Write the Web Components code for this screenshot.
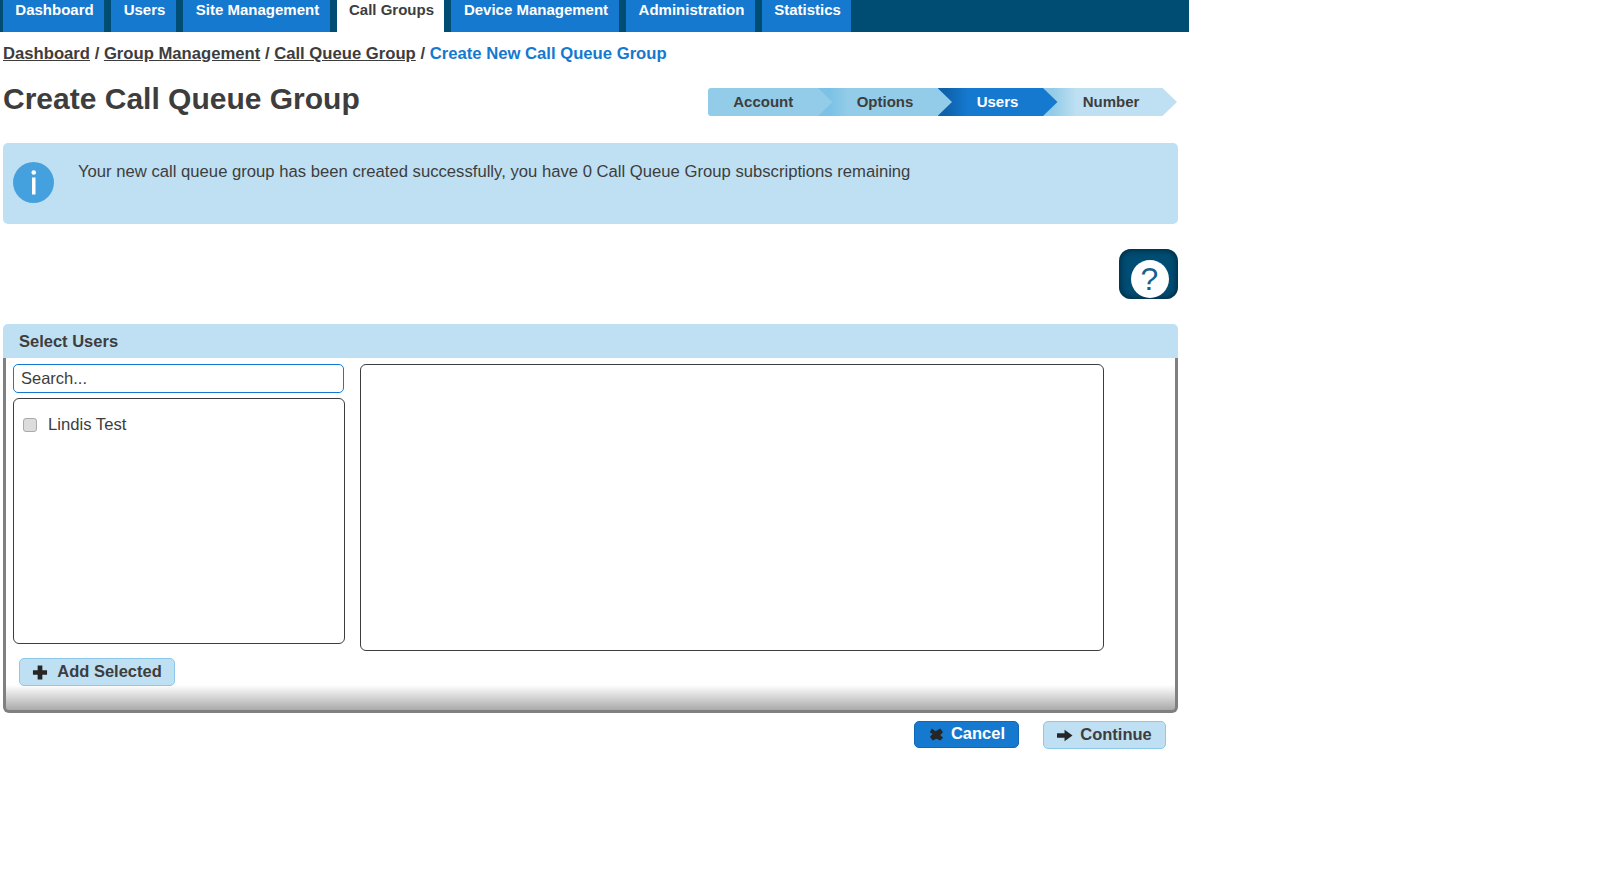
<!DOCTYPE html>
<html lang="en">
<head>
<meta charset="utf-8">
<title>Create Call Queue Group</title>
<style>
  html, body { margin: 0; padding: 0; background: #fff; }
  body { font-family: "Liberation Sans", Arial, sans-serif; color: #3d3d3d; }
</style>
</head>
<body>
<app-nav>
  <nav-tab width="101">Dashboard</nav-tab>
  <nav-tab width="65">Users</nav-tab>
  <nav-tab width="147">Site Management</nav-tab>
  <nav-tab width="107" active>Call Groups</nav-tab>
  <nav-tab width="168">Device Management</nav-tab>
  <nav-tab width="129">Administration</nav-tab>
  <nav-tab width="89">Statistics</nav-tab>
</app-nav>
<page-main>
  <bread-crumb current="Create New Call Queue Group">
    <a href="#">Dashboard</a>
    <a href="#">Group Management</a>
    <a href="#">Call Queue Group</a>
  </bread-crumb>
  <page-heading heading="Create Call Queue Group">
    <step-item width="124.5" pad="14" kind="done" first>Account</step-item>
    <step-item width="134" kind="done">Options</step-item>
    <step-item width="120" kind="current">Users</step-item>
    <step-item width="134" pad="-2" kind="todo">Number</step-item>
  </page-heading>
  <info-box>Your new call queue group has been created successfully, you have 0 Call Queue Group subscriptions remaining</info-box>
  <help-button></help-button>
  <select-panel heading="Select Users">
    <user-check>Lindis Test</user-check>
  </select-panel>
  <form-actions>
    <action-button kind="primary" icon="cross" width="105">Cancel</action-button>
    <action-button kind="light" icon="arrow" width="123">Continue</action-button>
  </form-actions>
</page-main>

<script>
const ICONS = {
  plus: '<path d="M6 0h5v5h5v5h-5v5H6v-5H1V5h5z"/>',
  cross: '<path d="M4 1l4 3 5-3 3 4-3 3 3 3-3 3-4-2-4 2-3-4 3-3-3-2z"/>',
  arrow: '<path d="M0 5h8V1.500L16.500 7.500 8 13.500V10H0z"/>'
};

class AppNav extends HTMLElement {
  constructor() {
    super();
    this.attachShadow({ mode: "open" });
    this.shadowRoot.innerHTML = `
      <style>
        :host { display: flex; width: 1189px; height: 32px; padding-left: 3px; box-sizing: border-box;
                background: #004d73; gap: 7px; }
      </style>
      <slot></slot>`;
  }
}

class NavTab extends HTMLElement {
  constructor() {
    super();
    this.attachShadow({ mode: "open" });
  }
  connectedCallback() {
    this.shadowRoot.innerHTML = `
      <style>
        :host { display: block; box-sizing: border-box; width: ${this.getAttribute("width")}px; height: 32px;
                padding-left: 2px; text-align: center; background: #1579d0; color: #fff; white-space: nowrap;
                font: bold 15px/20px "Liberation Sans", Arial, sans-serif; }
        :host([active]) { background: #fff; color: #3d3d3d; }
      </style>
      <slot></slot>`;
  }
}

class PageMain extends HTMLElement {
  constructor() {
    super();
    this.attachShadow({ mode: "open" });
    this.shadowRoot.innerHTML = `
      <style>
        :host { display: block; width: 1175px; margin-left: 3px; }
      </style>
      <slot></slot>`;
  }
}

class BreadCrumb extends HTMLElement {
  constructor() {
    super();
    this.attachShadow({ mode: "open" });
    this.shadowRoot.innerHTML = `
      <style>
        :host { display: block; margin-top: 12px; font: bold 16.670px/20px "Liberation Sans", Arial, sans-serif; color: #3d3d3d; }
        a { color: #3d3d3d; text-decoration: underline; }
        .current { color: #1579d0; }
      </style>
      <div id="trail"></div>`;
  }
  connectedCallback() {
    const parts = [...this.querySelectorAll("a")].map((a) => `<a href="#">${a.textContent}</a>`);
    parts.push(`<span class="current">${this.getAttribute("current")}</span>`);
    this.shadowRoot.getElementById("trail").innerHTML = parts.join(" / ");
  }
}

class PageHeading extends HTMLElement {
  constructor() {
    super();
    this.attachShadow({ mode: "open" });
  }
  connectedCallback() {
    this.shadowRoot.innerHTML = `
      <style>
        :host { display: flex; justify-content: space-between; align-items: flex-start; margin-top: 24px;
                padding-right: 1px; height: 28px; }
        h1 { margin: 1px 0 0; font: bold 30px/20px "Liberation Sans", Arial, sans-serif; color: #3d3d3d; }
        .steps { display: flex; }
      </style>
      <h1>${this.getAttribute("heading")}</h1>
      <div class="steps"><slot></slot></div>`;
  }
}

class StepItem extends HTMLElement {
  constructor() {
    super();
    this.attachShadow({ mode: "open" });
  }
  connectedCallback() {
    const width = this.getAttribute("width");
    const pad = this.getAttribute("pad") || 0;
    this.shadowRoot.innerHTML = `
      <style>
        :host { display: flex; align-items: center; justify-content: center; box-sizing: border-box;
                width: ${width}px; height: 28px; padding-right: ${Math.max(pad, 0)}px; padding-left: ${Math.max(-pad, 0)}px; margin-left: -14.500px;
                font: bold 15px/28px "Liberation Sans", Arial, sans-serif; color: #3d3d3d;
                clip-path: polygon(0 0, calc(100% - 14.500px) 0, 100% 50%, calc(100% - 14.500px) 100%, 0 100%); }
        :host([kind="done"]) { background: linear-gradient(90deg, #7bc2e6 0, #7bc2e6 12px, #93cce8 30px); }
        :host([kind="done"][first]) { background: #93cce8; margin-left: 0; border-radius: 3px 0 0 3px; }
        :host([kind="current"]) { background: linear-gradient(90deg, #0e62ab 0, #0e62ab 8px, #1579d0 30px); color: #fff; }
        :host([kind="todo"]) { background: linear-gradient(90deg, #93cce8 0, #93cce8 10px, #bfe0f2 34px); }
      </style>
      <slot></slot>`;
    // earlier steps sit on top so their arrow shows over the next one
    const index = [...this.parentNode.children].indexOf(this);
    this.style.position = "relative";
    this.style.zIndex = 10 - index;
  }
}

class InfoBox extends HTMLElement {
  constructor() {
    super();
    this.attachShadow({ mode: "open" });
    this.shadowRoot.innerHTML = `
      <style>
        :host { display: flex; margin-top: 27px; height: 81px; background: #bfe0f2; border-radius: 5px;
                box-sizing: border-box; padding: 19px 10px 0 10px; gap: 24px;
                font: 16.670px/20px "Liberation Sans", Arial, sans-serif; color: #3d3d3d; }
        svg { flex: none; width: 41px; height: 41px; }
      </style>
      <svg viewBox="0 0 41 41" aria-hidden="true">
        <circle cx="20.500" cy="20.500" r="20.500" fill="#45a1de"/>
        <rect x="19" y="15.500" width="3.500" height="17" fill="#fff"/>
        <circle cx="20.750" cy="10.500" r="2.300" fill="#fff"/>
      </svg>
      <div><slot></slot></div>`;
  }
}

class HelpButton extends HTMLElement {
  constructor() {
    super();
    this.attachShadow({ mode: "open" });
    this.shadowRoot.innerHTML = `
      <style>
        :host { display: flex; justify-content: flex-end; margin-top: 25px; }
        .btn { display: flex; align-items: center; justify-content: center; box-sizing: border-box;
               width: 59px; height: 50px; border-radius: 12px; padding-top: 9px; padding-left: 2px;
               background: #004d73; box-shadow: inset 0 0 6px 1px #00263b; }
        .dot { width: 38px; height: 38px; border-radius: 50%; background: #fff; color: #17608e;
               font: 32px/38px "Liberation Sans", Arial, sans-serif; text-align: center; }
      </style>
      <div class="btn"><div class="dot">?</div></div>`;
  }
}

class SelectPanel extends HTMLElement {
  constructor() {
    super();
    this.attachShadow({ mode: "open" });
  }
  connectedCallback() {
    this.shadowRoot.innerHTML = `
      <style>
        :host { display: block; margin-top: 25px; font-family: "Liberation Sans", Arial, sans-serif; color: #3d3d3d; }
        header { height: 34px; box-sizing: border-box; padding-left: 16px; background: #bfe0f2;
                 border-radius: 5px 5px 0 0; font: bold 16.500px/34px "Liberation Sans", Arial, sans-serif; }
        .body { box-sizing: border-box; height: 355px; padding: 6px 7px 0; border: solid #808080; border-width: 0 3px 3px;
                border-radius: 0 0 6px 6px;
                background: linear-gradient(180deg, #fff 0, #fff calc(100% - 25px), #aaa 100%); }
        .cols { display: flex; gap: 15px; align-items: flex-start; }
        .left { width: 332px; display: flex; flex-direction: column; gap: 5px; }
        input { box-sizing: border-box; width: 331px; height: 29px; padding: 0 7px; border: 1px solid #1579d0; border-radius: 5px;
                font: 16.500px "Liberation Sans", Arial, sans-serif; color: #3d3d3d; outline: none; }
        input::placeholder { color: #3d3d3d; opacity: 1; }
        .list { box-sizing: border-box; height: 246px; padding: 16px 9px; border: 1px solid #3d3d3d; border-radius: 6px; }
        .chosen { box-sizing: border-box; width: 744px; height: 287px; border: 1px solid #3d3d3d; border-radius: 6px; }
        .add { margin: 7px 0 0 6px; }
      </style>
      <header>${this.getAttribute("heading")}</header>
      <div class="body">
        <div class="cols">
          <div class="left">
            <input type="text" placeholder="Search...">
            <div class="list"><slot></slot></div>
          </div>
          <div class="chosen"></div>
        </div>
        <div class="add"><action-button kind="light" icon="plus" width="156">Add Selected</action-button></div>
      </div>`;
  }
}

class UserCheck extends HTMLElement {
  constructor() {
    super();
    this.attachShadow({ mode: "open" });
    this.shadowRoot.innerHTML = `
      <style>
        :host { display: flex; align-items: center; gap: 11px; height: 20px;
                font: 16.670px/20px "Liberation Sans", Arial, sans-serif; color: #3d3d3d; }
        .box { width: 14px; height: 14px; box-sizing: border-box; border: 1px solid #aaa; border-radius: 3px;
               background: #dcdcdc; }
      </style>
      <span class="box"></span><slot></slot>`;
  }
}

class FormActions extends HTMLElement {
  constructor() {
    super();
    this.attachShadow({ mode: "open" });
    this.shadowRoot.innerHTML = `
      <style>
        :host { display: flex; justify-content: flex-end; gap: 24px; margin-top: 8px; padding-right: 12px; }
      </style>
      <slot></slot>`;
  }
}

class ActionButton extends HTMLElement {
  constructor() {
    super();
    this.attachShadow({ mode: "open" });
  }
  connectedCallback() {
    const icon = ICONS[this.getAttribute("icon")];
    this.shadowRoot.innerHTML = `
      <style>
        :host { display: inline-flex; align-items: center; justify-content: center; gap: 7px; box-sizing: border-box;
                width: ${this.getAttribute("width")}px; height: 28px; border-radius: 5px; border: 1px solid #8cc8ea;
                padding-bottom: 2px; background: #bfe0f2;
                color: #3d3d3d; font: bold 16.500px/24px "Liberation Sans", Arial, sans-serif; }
        :host([kind="primary"]) { background: #1579d0; border-color: #1169b5; color: #fff; height: 27px; padding-bottom: 3px; }
        svg { width: 16px; height: 15px; fill: #262626; filter: blur(.7px); flex: none; margin-top: 2px; }
        :host([icon="plus"]) { gap: 9px; }
      </style>
      <svg viewBox="0 0 17 15" aria-hidden="true">${icon}</svg><slot></slot>`;
  }
}

customElements.define("app-nav", AppNav);
customElements.define("nav-tab", NavTab);
customElements.define("page-main", PageMain);
customElements.define("bread-crumb", BreadCrumb);
customElements.define("page-heading", PageHeading);
customElements.define("step-item", StepItem);
customElements.define("info-box", InfoBox);
customElements.define("help-button", HelpButton);
customElements.define("select-panel", SelectPanel);
customElements.define("user-check", UserCheck);
customElements.define("form-actions", FormActions);
customElements.define("action-button", ActionButton);
</script>
</body>
</html>
